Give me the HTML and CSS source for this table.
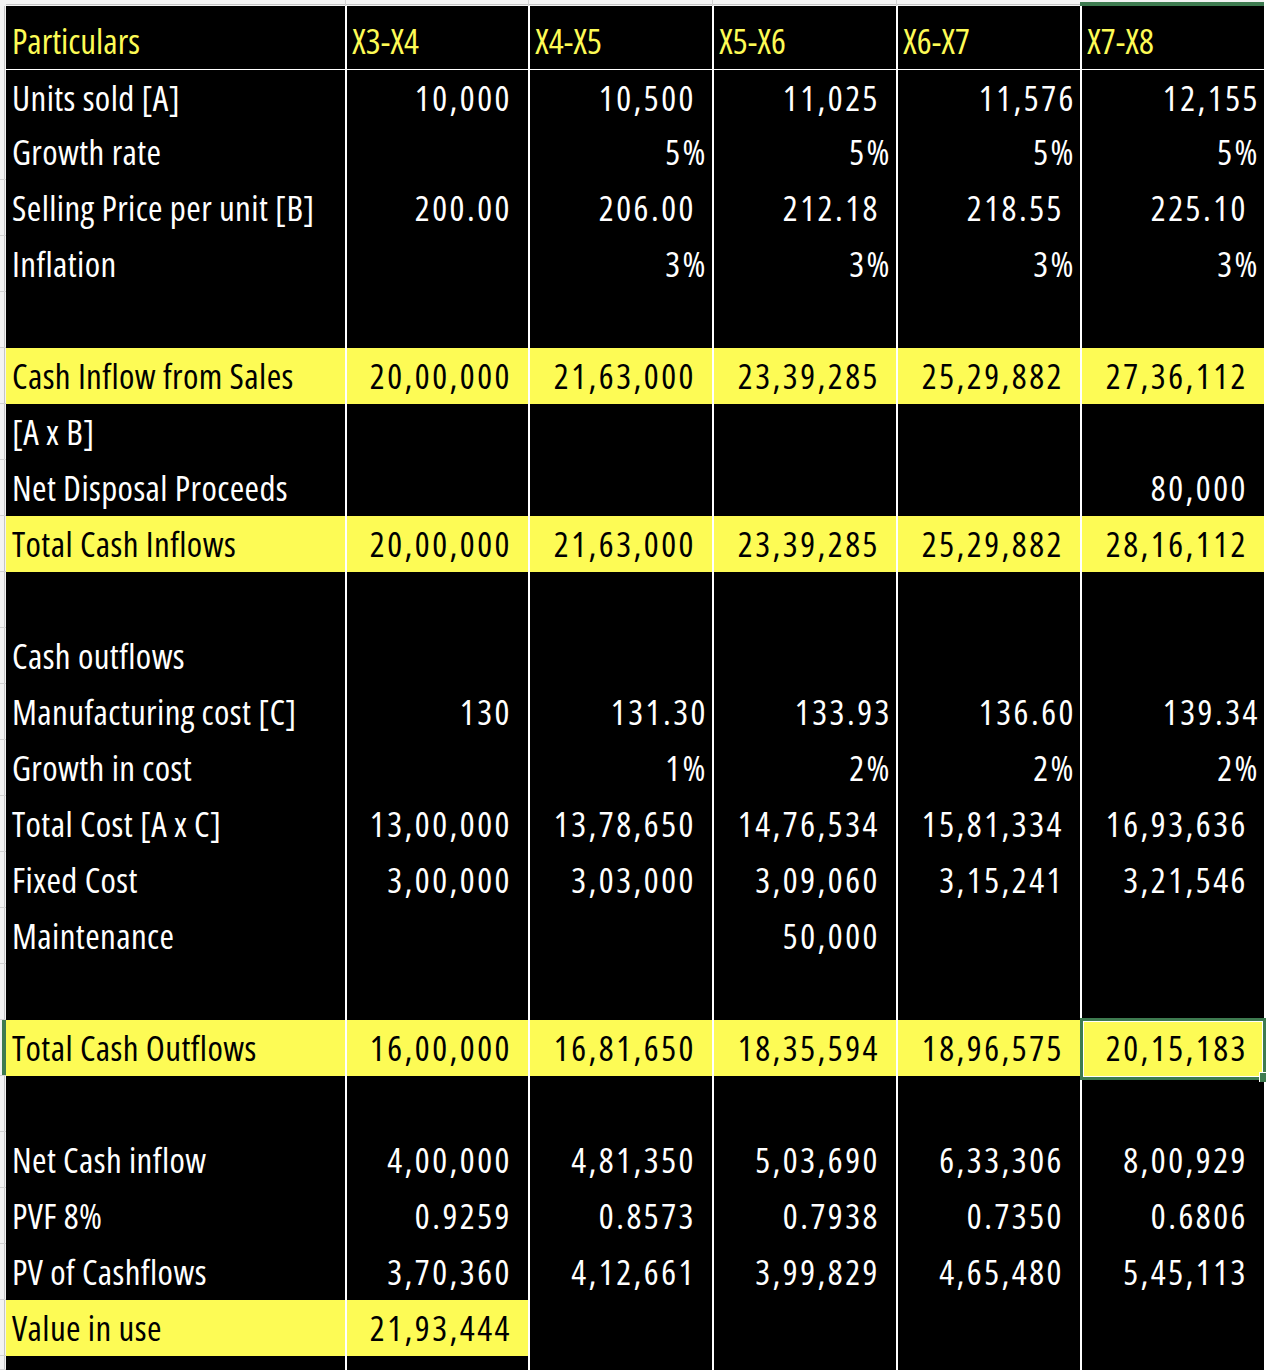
FILE: index.html
```html
<!DOCTYPE html>
<html>
<head>
<meta charset="utf-8">
<link rel="stylesheet" href="styles.css">
<title>Value in use</title>
</head>
<body>
<div class="sheet">
  <div class="row strip">
    <div class="rh corner"></div>
    <div class="ch first"></div>
    <div class="ch"></div>
    <div class="ch"></div>
    <div class="ch"></div>
    <div class="ch"></div>
    <div class="ch sel"></div>
  </div>

  <div class="row head">
    <div class="rh"></div>
    <div class="c lab">Particulars</div>
    <div class="c">X3-X4</div>
    <div class="c">X4-X5</div>
    <div class="c">X5-X6</div>
    <div class="c">X6-X7</div>
    <div class="c">X7-X8</div>
  </div>

  <div class="row r1">
    <div class="rh"></div>
    <div class="c lab">Units sold [A]</div>
    <div class="c">10,000</div>
    <div class="c">10,500</div>
    <div class="c">11,025</div>
    <div class="c t">11,576</div>
    <div class="c t">12,155</div>
  </div>

  <div class="row">
    <div class="rh"></div>
    <div class="c lab">Growth rate</div>
    <div class="c"></div>
    <div class="c t">5%</div>
    <div class="c t">5%</div>
    <div class="c t">5%</div>
    <div class="c t">5%</div>
  </div>

  <div class="row">
    <div class="rh"></div>
    <div class="c lab">Selling Price per unit [B]</div>
    <div class="c">200.00</div>
    <div class="c">206.00</div>
    <div class="c">212.18</div>
    <div class="c">218.55</div>
    <div class="c">225.10</div>
  </div>

  <div class="row">
    <div class="rh"></div>
    <div class="c lab">Inflation</div>
    <div class="c"></div>
    <div class="c t">3%</div>
    <div class="c t">3%</div>
    <div class="c t">3%</div>
    <div class="c t">3%</div>
  </div>

  <div class="row">
    <div class="rh"></div>
    <div class="c lab"></div>
    <div class="c"></div>
    <div class="c"></div>
    <div class="c"></div>
    <div class="c"></div>
    <div class="c"></div>
  </div>

  <div class="row hl">
    <div class="rh"></div>
    <div class="c lab">Cash Inflow from Sales</div>
    <div class="c">20,00,000</div>
    <div class="c">21,63,000</div>
    <div class="c">23,39,285</div>
    <div class="c">25,29,882</div>
    <div class="c">27,36,112</div>
  </div>

  <div class="row">
    <div class="rh"></div>
    <div class="c lab">[A x B]</div>
    <div class="c"></div>
    <div class="c"></div>
    <div class="c"></div>
    <div class="c"></div>
    <div class="c"></div>
  </div>

  <div class="row">
    <div class="rh"></div>
    <div class="c lab">Net Disposal Proceeds</div>
    <div class="c"></div>
    <div class="c"></div>
    <div class="c"></div>
    <div class="c"></div>
    <div class="c">80,000</div>
  </div>

  <div class="row hl">
    <div class="rh"></div>
    <div class="c lab">Total Cash Inflows</div>
    <div class="c">20,00,000</div>
    <div class="c">21,63,000</div>
    <div class="c">23,39,285</div>
    <div class="c">25,29,882</div>
    <div class="c">28,16,112</div>
  </div>

  <div class="row">
    <div class="rh"></div>
    <div class="c lab"></div>
    <div class="c"></div>
    <div class="c"></div>
    <div class="c"></div>
    <div class="c"></div>
    <div class="c"></div>
  </div>

  <div class="row">
    <div class="rh"></div>
    <div class="c lab">Cash outflows</div>
    <div class="c"></div>
    <div class="c"></div>
    <div class="c"></div>
    <div class="c"></div>
    <div class="c"></div>
  </div>

  <div class="row">
    <div class="rh"></div>
    <div class="c lab">Manufacturing cost [C]</div>
    <div class="c">130</div>
    <div class="c t">131.30</div>
    <div class="c t">133.93</div>
    <div class="c t">136.60</div>
    <div class="c t">139.34</div>
  </div>

  <div class="row">
    <div class="rh"></div>
    <div class="c lab">Growth in cost</div>
    <div class="c"></div>
    <div class="c t">1%</div>
    <div class="c t">2%</div>
    <div class="c t">2%</div>
    <div class="c t">2%</div>
  </div>

  <div class="row">
    <div class="rh"></div>
    <div class="c lab">Total Cost [A x C]</div>
    <div class="c">13,00,000</div>
    <div class="c">13,78,650</div>
    <div class="c">14,76,534</div>
    <div class="c">15,81,334</div>
    <div class="c">16,93,636</div>
  </div>

  <div class="row">
    <div class="rh"></div>
    <div class="c lab">Fixed Cost</div>
    <div class="c">3,00,000</div>
    <div class="c">3,03,000</div>
    <div class="c">3,09,060</div>
    <div class="c">3,15,241</div>
    <div class="c">3,21,546</div>
  </div>

  <div class="row">
    <div class="rh"></div>
    <div class="c lab">Maintenance</div>
    <div class="c"></div>
    <div class="c"></div>
    <div class="c">50,000</div>
    <div class="c"></div>
    <div class="c"></div>
  </div>

  <div class="row">
    <div class="rh"></div>
    <div class="c lab"></div>
    <div class="c"></div>
    <div class="c"></div>
    <div class="c"></div>
    <div class="c"></div>
    <div class="c"></div>
  </div>

  <div class="row hl">
    <div class="rh selrow"></div>
    <div class="c lab">Total Cash Outflows</div>
    <div class="c">16,00,000</div>
    <div class="c">16,81,650</div>
    <div class="c">18,35,594</div>
    <div class="c">18,96,575</div>
    <div class="c active">20,15,183<span class="selbox"></span><span class="handle"></span></div>
  </div>

  <div class="row">
    <div class="rh"></div>
    <div class="c lab"></div>
    <div class="c"></div>
    <div class="c"></div>
    <div class="c"></div>
    <div class="c"></div>
    <div class="c"></div>
  </div>

  <div class="row">
    <div class="rh"></div>
    <div class="c lab">Net Cash inflow</div>
    <div class="c">4,00,000</div>
    <div class="c">4,81,350</div>
    <div class="c">5,03,690</div>
    <div class="c">6,33,306</div>
    <div class="c">8,00,929</div>
  </div>

  <div class="row">
    <div class="rh"></div>
    <div class="c lab">PVF 8%</div>
    <div class="c">0.9259</div>
    <div class="c">0.8573</div>
    <div class="c">0.7938</div>
    <div class="c">0.7350</div>
    <div class="c">0.6806</div>
  </div>

  <div class="row">
    <div class="rh"></div>
    <div class="c lab">PV of Cashflows</div>
    <div class="c">3,70,360</div>
    <div class="c">4,12,661</div>
    <div class="c">3,99,829</div>
    <div class="c">4,65,480</div>
    <div class="c">5,45,113</div>
  </div>

  <div class="row">
    <div class="rh"></div>
    <div class="c lab yc">Value in use</div>
    <div class="c yc">21,93,444</div>
    <div class="c"></div>
    <div class="c"></div>
    <div class="c"></div>
    <div class="c"></div>
  </div>

  <div class="row last">
    <div class="rh"></div>
    <div class="c lab"></div>
    <div class="c"></div>
    <div class="c"></div>
    <div class="c"></div>
    <div class="c"></div>
    <div class="c"></div>
  </div>
</div>
</body>
</html>
```

FILE: styles.css
```css
* {
  box-sizing: border-box;
}

html, body {
  margin: 0;
  padding: 0;
  background: #ffffff;
  overflow: hidden;
}

.sheet {
  width: 1266px;
  font-family: "Open Sans", "DejaVu Sans Condensed", sans-serif;
  font-stretch: 82%;
  font-size: 35px;
}

.row {
  display: grid;
  grid-template-columns: 6px 339px 183px 184px 184px 184px 184px;
  height: 56px;
}

/* spreadsheet chrome: row headers on the left */
.rh {
  background: linear-gradient(to right, #f3f3f3 0, #f3f3f3 4px, #c4c4c4 4px, #c4c4c4 5px, #f3f3f3 5px);
  box-shadow: inset 0 -1px 0 #d2d2d2;
}

.rh.selrow {
  background: linear-gradient(to right, #f3f3f3 0, #f3f3f3 2px, #3e7b50 2px);
}

/* spreadsheet chrome: column header strip on top */
.strip {
  height: 6px;
}

.ch {
  background: linear-gradient(to bottom, #f3f3f3 0, #f3f3f3 4px, #c4c4c4 4px, #c4c4c4 5px, #f3f3f3 5px);
  box-shadow: inset 1px 0 0 #d2d2d2;
}

.ch.first {
  box-shadow: none;
}

.ch.sel {
  background: linear-gradient(to bottom, #f3f3f3 0, #f3f3f3 2px, #3e7b50 2px);
  box-shadow: none;
}

.corner {
  background: #f3f3f3;
  box-shadow: none;
}

/* cells */
.c {
  background: #000000;
  color: #ffffff;
  border-left: 2px solid #ffffff;
  text-align: right;
  line-height: 56px;
  padding-right: 16px;
  white-space: nowrap;
  letter-spacing: 2.5px;
}

.c.t {
  padding-right: 4px;
}

.c.lab {
  border-left: none;
  text-align: left;
  padding-left: 6px;
  padding-right: 0;
  letter-spacing: 0.4px;
}

.head {
  height: 64px;
}

.head .c {
  color: #fdfb55;
  text-align: left;
  padding-left: 5px;
  padding-right: 0;
  padding-top: 7px;
  border-bottom: 2px solid #ffffff;
  letter-spacing: 0;
}

.head .c.lab {
  padding-left: 6px;
}

.r1 {
  height: 54px;
}

.r1 .c {
  line-height: 55px;
}

.hl .c,
.c.yc {
  background: #fdfb55;
  color: #000000;
}

.last {
  height: 14px;
}

/* active cell selection */
.active {
  position: relative;
}

.selbox {
  position: absolute;
  left: -2px;
  top: -2px;
  right: -2px;
  bottom: -4px;
  border: 3px solid #3e7b50;
  box-shadow: inset 0 0 0 1px #ffffff;
  pointer-events: none;
}

.handle {
  position: absolute;
  right: -2px;
  bottom: -6px;
  width: 7px;
  height: 10px;
  background: #3e7b50;
  border-left: 1px solid #ffffff;
  border-top: 1px solid #ffffff;
}
```
